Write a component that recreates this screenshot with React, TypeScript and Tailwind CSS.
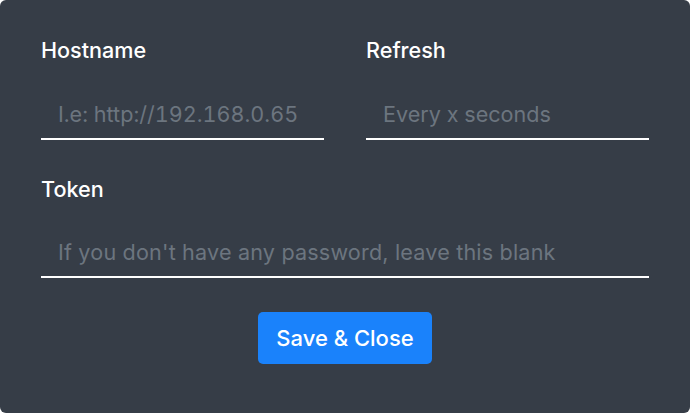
import React from "react";

export default function App() {
  const font = { fontFamily: "Inter, 'Noto Sans', sans-serif" };
  return (
    <div className="w-[690px] h-[413px] bg-white" style={font}>
      <div className="w-full h-full rounded-md bg-[#363d47] px-[41px] pt-[35px] flex flex-col">
        <div className="grid grid-cols-2 gap-x-[42px]">
          <div className="flex flex-col">
            <label className="text-[21.6px] leading-[30px] font-medium text-white">Hostname</label>
            <input
              className="mt-[25px] h-[50px] bg-transparent border-b-2 border-white pl-[17px] text-[21.6px] tabular-nums text-white placeholder:text-[#6c757f] outline-none"
              placeholder="I.e: http://192.168.0.65"
            />
          </div>
          <div className="flex flex-col">
            <label className="text-[21.6px] leading-[30px] font-medium text-white">Refresh</label>
            <input
              className="mt-[25px] h-[50px] bg-transparent border-b-2 border-white pl-[17px] text-[21.6px] tabular-nums text-white placeholder:text-[#6c757f] outline-none"
              placeholder="Every x seconds"
            />
          </div>
        </div>
        <div className="flex flex-col mt-[34px]">
          <label className="text-[21.6px] leading-[30px] font-medium text-white">Token</label>
          <input
            className="mt-[24px] h-[50px] bg-transparent border-b-2 border-white pl-[17px] text-[21.6px] tracking-[0.17px] text-white placeholder:text-[#6c757f] outline-none"
            placeholder="If you don't have any password, leave this blank"
          />
        </div>
        <div className="flex justify-center mt-[34px]">
          <button className="w-[174px] h-[52px] rounded-[5px] bg-[#1a82fb] text-white text-[22px] font-medium">
            Save &amp; Close
          </button>
        </div>
      </div>
    </div>
  );
}
